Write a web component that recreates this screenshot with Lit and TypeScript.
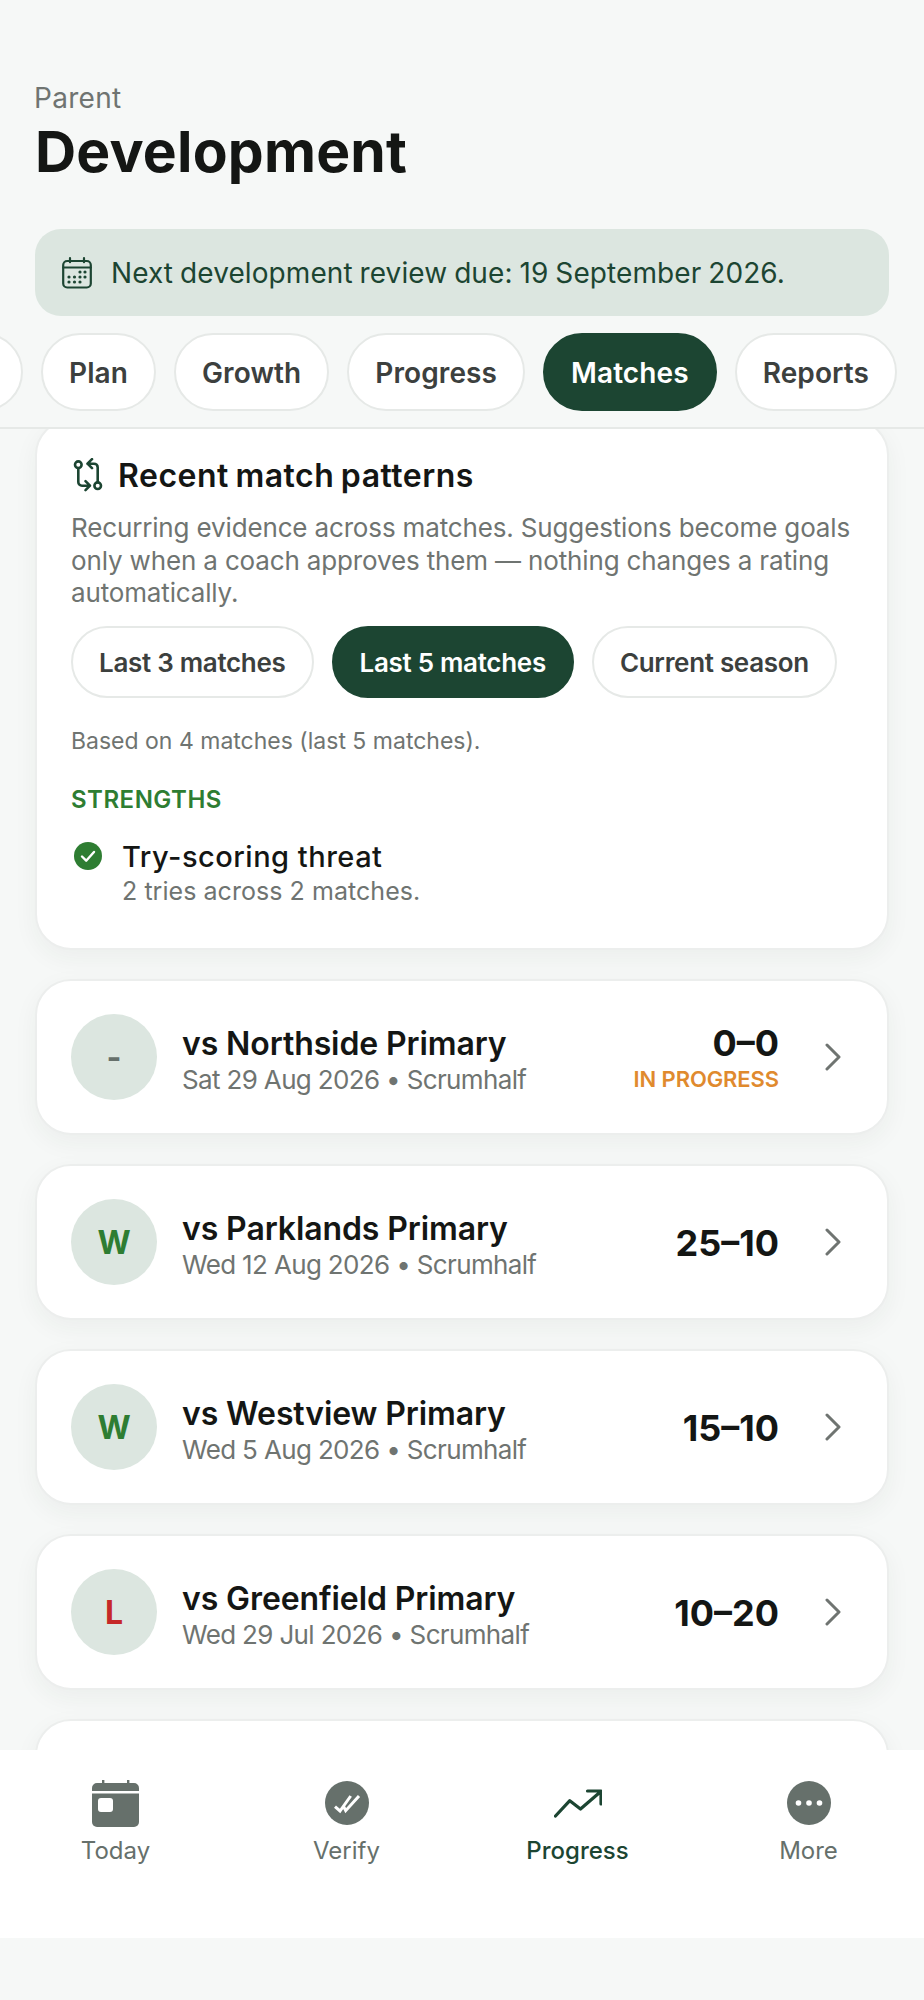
import { LitElement, html, css, svg } from 'lit'
import { customElement } from 'lit/decorators.js'

const tabs = ['Plan', 'Growth', 'Progress', 'Matches', 'Reports']
const ranges = ['Last 3 matches', 'Last 5 matches', 'Current season']

const matches = [
  { result: '-', tone: 'none', name: 'vs Northside Primary', meta: 'Sat 29 Aug 2026 • Scrumhalf', score: '0–0', status: 'IN PROGRESS' },
  { result: 'W', tone: 'win', name: 'vs Parklands Primary', meta: 'Wed 12 Aug 2026 • Scrumhalf', score: '25–10', status: '' },
  { result: 'W', tone: 'win', name: 'vs Westview Primary', meta: 'Wed 5 Aug 2026 • Scrumhalf', score: '15–10', status: '' },
  { result: 'L', tone: 'loss', name: 'vs Greenfield Primary', meta: 'Wed 29 Jul 2026 • Scrumhalf', score: '10–20', status: '' },
]

const navIcons = {
  today: svg`<path fill="#66706b" d="M10 0h2.400v3H35V0h2.400v3H42a5 5 0 0 1 5 5v3H0V8a5 5 0 0 1 5-5h5z"/>
    <path fill="#66706b" d="M0 13.500h47V42a5 5 0 0 1-5 5H5a5 5 0 0 1-5-5z"/>
    <rect x="6" y="18" width="15" height="14" rx="3" fill="#fff"/>`,
  verify: svg`<circle cx="24" cy="23" r="22" fill="#66706b"/>
    <path d="M12 26.700l5 4.300 10.700-15M20.700 26.700l2 4L36 16" fill="none" stroke="#fff" stroke-width="3"/>`,
  progress: svg`<path d="M1.500 36L15.800 20.700 26.500 29 46.500 11.700M33.500 11H47v13" fill="none" stroke="#1c4532" stroke-width="3.200" stroke-linecap="round" stroke-linejoin="round"/>`,
  more: svg`<circle cx="24" cy="23" r="22" fill="#66706b"/>
    <circle cx="13.500" cy="23" r="2.800" fill="#fff"/><circle cx="24" cy="23" r="2.800" fill="#fff"/><circle cx="34.500" cy="23" r="2.800" fill="#fff"/>`,
}

const navItems = [
  { label: 'Today', icon: navIcons.today, active: false },
  { label: 'Verify', icon: navIcons.verify, active: false },
  { label: 'Progress', icon: navIcons.progress, active: true },
  { label: 'More', icon: navIcons.more, active: false },
]

@customElement('app-root')
export class AppRoot extends LitElement {
  static styles = css`
    :host {
      display: flex;
      flex-direction: column;
      height: 2000px;
      background: #f6f8f7;
      color: #141614;
      font-family: Inter, "Liberation Sans", sans-serif;
    }
    * { box-sizing: border-box; }
    svg { display: block; flex: none; }

    .head {
      flex: none;
      border-bottom: 2px solid #e6e9e7;
      padding-top: 83px;
    }
    .role {
      margin: 0 34px;
      font-size: 28px;
      line-height: 30px;
      letter-spacing: 0.3px;
      color: #6f7471;
    }
    h1 {
      margin: 6px 35px 0;
      font-size: 57px;
      line-height: 66px;
      font-weight: 700;
      letter-spacing: 0.2px;
    }
    .notice {
      margin: 44px 35px 0;
      height: 87px;
      display: flex;
      align-items: center;
      gap: 19px;
      padding-left: 27px;
      border-radius: 26px;
      background: #dce6e0;
      color: #1c4532;
      font-size: 28px;
      letter-spacing: 0.08px;
      word-spacing: -1px;
    }
    .tabs {
      display: flex;
      justify-content: flex-end;
      gap: 18px;
      overflow: hidden;
      margin-top: 17px;
      padding: 0 27px 16px 0;
    }
    .pill {
      flex: none;
      display: flex;
      align-items: center;
      border: 2px solid #e6e9e7;
      border-radius: 40px;
      background: #fff;
      color: #3c403e;
      font-weight: 600;
      white-space: nowrap;
    }
    .pill.on {
      background: #1c4532;
      border-color: #1c4532;
      color: #fff;
    }
    .tabs .pill {
      height: 78px;
      padding: 2px 26px 0;
      font-size: 28px;
      letter-spacing: 0.1px;
    }
    .tabs .pill.stub { width: 120px; }

    main {
      flex: 1;
      min-height: 0;
      overflow: hidden;
      padding: 0 35px;
    }
    .card {
      background: #fff;
      border: 2px solid #eceeed;
      border-radius: 36px;
      box-shadow: 0 8px 24px rgba(30, 50, 40, 0.05);
    }
    .patterns {
      margin-top: -10px;
      height: 531px;
      padding: 35px 34px 0;
    }
    .patterns-title {
      display: flex;
      align-items: center;
      gap: 14px;
      margin-left: 1px;
      font-size: 32px;
      line-height: 40px;
      font-weight: 600;
      letter-spacing: 0.5px;
      word-spacing: -2px;
    }
    .patterns-desc {
      margin: 16px 0 0;
      font-size: 26px;
      line-height: 32.5px;
      letter-spacing: -0.15px;
      color: #6f7471;
    }
    .ranges {
      display: flex;
      gap: 18px;
      margin-top: 16px;
    }
    .ranges .pill {
      height: 72px;
      padding: 2px 26px 0;
      font-size: 26px;
      letter-spacing: -0.3px;
    }
    .based {
      margin: 29px 0 0;
      font-size: 23px;
      line-height: 28px;
      color: #6f7471;
    }
    .section {
      margin: 30px 0 0;
      font-size: 24px;
      line-height: 30px;
      font-weight: 600;
      letter-spacing: 0.5px;
      color: #2e7d32;
    }
    .strength {
      display: flex;
      gap: 20px;
      margin-top: 24px;
    }
    .strength svg { margin: 3px 0 0 3px; }
    .strength-name {
      font-size: 29px;
      line-height: 36px;
      font-weight: 500;
      letter-spacing: 0.5px;
    }
    .strength-note {
      font-size: 25px;
      line-height: 32px;
      letter-spacing: 0.05px;
      color: #6f7471;
    }

    .match {
      display: flex;
      align-items: center;
      height: 156px;
      margin-top: 29px;
      padding: 0 45px 0 34px;
    }
    .avatar {
      flex: none;
      display: flex;
      align-items: center;
      justify-content: center;
      width: 86px;
      height: 86px;
      border-radius: 50%;
      background: #dce6e0;
      font-size: 32px;
      font-weight: 700;
    }
    .avatar.none { color: #66706b; }
    .avatar.win { color: #2e7d32; }
    .avatar.loss { color: #c62828; }
    .match-info { flex: 1; margin-left: 25px; padding-top: 8px; }
    .match-name {
      font-size: 32px;
      line-height: 38px;
      font-weight: 600;
      letter-spacing: -0.1px;
    }
    .match-meta {
      font-size: 26px;
      line-height: 34px;
      letter-spacing: -0.65px;
      color: #6f7471;
    }
    .match-score { text-align: right; padding-top: 2px; }
    .score {
      font-size: 36px;
      line-height: 42px;
      font-weight: 700;
    }
    .status {
      font-size: 22px;
      line-height: 30px;
      font-weight: 600;
      letter-spacing: -0.1px;
      color: #e08a2e;
    }
    .chevron { margin-left: 45px; }

    nav {
      flex: none;
      display: grid;
      grid-template-columns: repeat(4, 1fr);
      height: 188px;
      margin-bottom: 62px;
      padding-top: 30px;
      background: #fff;
    }
    .nav-item {
      display: flex;
      flex-direction: column;
      align-items: center;
      gap: 8px;
      font-size: 24px;
      line-height: 30px;
      color: #66706b;
    }
    .nav-item.on { color: #1c4532; font-weight: 500; }
  `

  renderMatch(m: (typeof matches)[number]) {
    return html`
      <div class="card match">
        <div class="avatar ${m.tone}">${m.result}</div>
        <div class="match-info">
          <div class="match-name">${m.name}</div>
          <div class="match-meta">${m.meta}</div>
        </div>
        <div class="match-score">
          <div class="score">${m.score}</div>
          ${m.status ? html`<div class="status">${m.status}</div>` : ''}
        </div>
        <svg class="chevron" width="18" height="28" viewBox="0 0 18 28" fill="none" stroke="#6f7471" stroke-width="3" stroke-linecap="round" stroke-linejoin="round">
          <path d="M3 2l12 12L3 26"/>
        </svg>
      </div>
    `
  }

  render() {
    return html`
      <header class="head">
        <div class="role">Parent</div>
        <h1>Development</h1>
        <div class="notice">
          <svg width="30" height="32" viewBox="0 0 30 32" fill="none" stroke="#1c4532" stroke-width="2.2" stroke-linecap="round">
            <rect x="1.2" y="4" width="27.6" height="26.5" rx="4"/>
            <path d="M1.2 10.5h27.6M8 1.2v4M22 1.2v4"/>
            <g fill="#1c4532" stroke="none">
              <circle cx="18" cy="15" r="1.6"/><circle cx="23" cy="15" r="1.6"/>
              <circle cx="7" cy="20" r="1.6"/><circle cx="12.500" cy="20" r="1.6"/><circle cx="18" cy="20" r="1.6"/><circle cx="23" cy="20" r="1.6"/>
              <circle cx="7" cy="25" r="1.6"/><circle cx="12.500" cy="25" r="1.6"/><circle cx="18" cy="25" r="1.6"/>
            </g>
          </svg>
          Next development review due: 19 September 2026.
        </div>
        <div class="tabs">
          <div class="pill stub"></div>
          ${tabs.map(t => html`<div class="pill ${t === 'Matches' ? 'on' : ''}">${t}</div>`)}
        </div>
      </header>

      <main>
        <section class="card patterns">
          <div class="patterns-title">
            <svg width="32" height="36" viewBox="0 0 32 36" fill="none" stroke="#1c4532" stroke-width="2.6" stroke-linecap="round" stroke-linejoin="round">
              <circle cx="6.300" cy="6.700" r="3.300"/>
              <circle cx="25.700" cy="27.700" r="3.300"/>
              <path d="M6.300 10.200V24a3.700 3.700 0 0 0 3.700 3.700h8M13.500 23.200l4.500 4.500-4.500 4.500"/>
              <path d="M25.700 24.200V9.400a3.700 3.700 0 0 0-3.700-3.700h-6.500M20 1.200l-4.500 4.500 4.500 4.500"/>
            </svg>
            Recent match patterns
          </div>
          <p class="patterns-desc">Recurring evidence across matches. Suggestions become goals<br>only when a coach approves them — nothing changes a rating<br>automatically.</p>
          <div class="ranges">
            ${ranges.map(r => html`<div class="pill ${r === 'Last 5 matches' ? 'on' : ''}">${r}</div>`)}
          </div>
          <p class="based">Based on 4 matches (last 5 matches).</p>
          <p class="section">STRENGTHS</p>
          <div class="strength">
            <svg width="28" height="28" viewBox="0 0 28 28">
              <circle cx="14" cy="14" r="14" fill="#2e7d32"/>
              <path d="M8 14.500l4.200 4.200L20 10" fill="none" stroke="#fff" stroke-width="2.400" stroke-linecap="round" stroke-linejoin="round"/>
            </svg>
            <div>
              <div class="strength-name">Try-scoring threat</div>
              <div class="strength-note">2 tries across 2 matches.</div>
            </div>
          </div>
        </section>
        ${matches.map(m => this.renderMatch(m))}
        <div class="card match"></div>
      </main>

      <nav>
        ${navItems.map(n => html`
          <div class="nav-item ${n.active ? 'on' : ''}">
            <svg width="48" height="48" viewBox="0 0 48 48">${n.icon}</svg>
            ${n.label}
          </div>
        `)}
      </nav>
    `
  }
}
